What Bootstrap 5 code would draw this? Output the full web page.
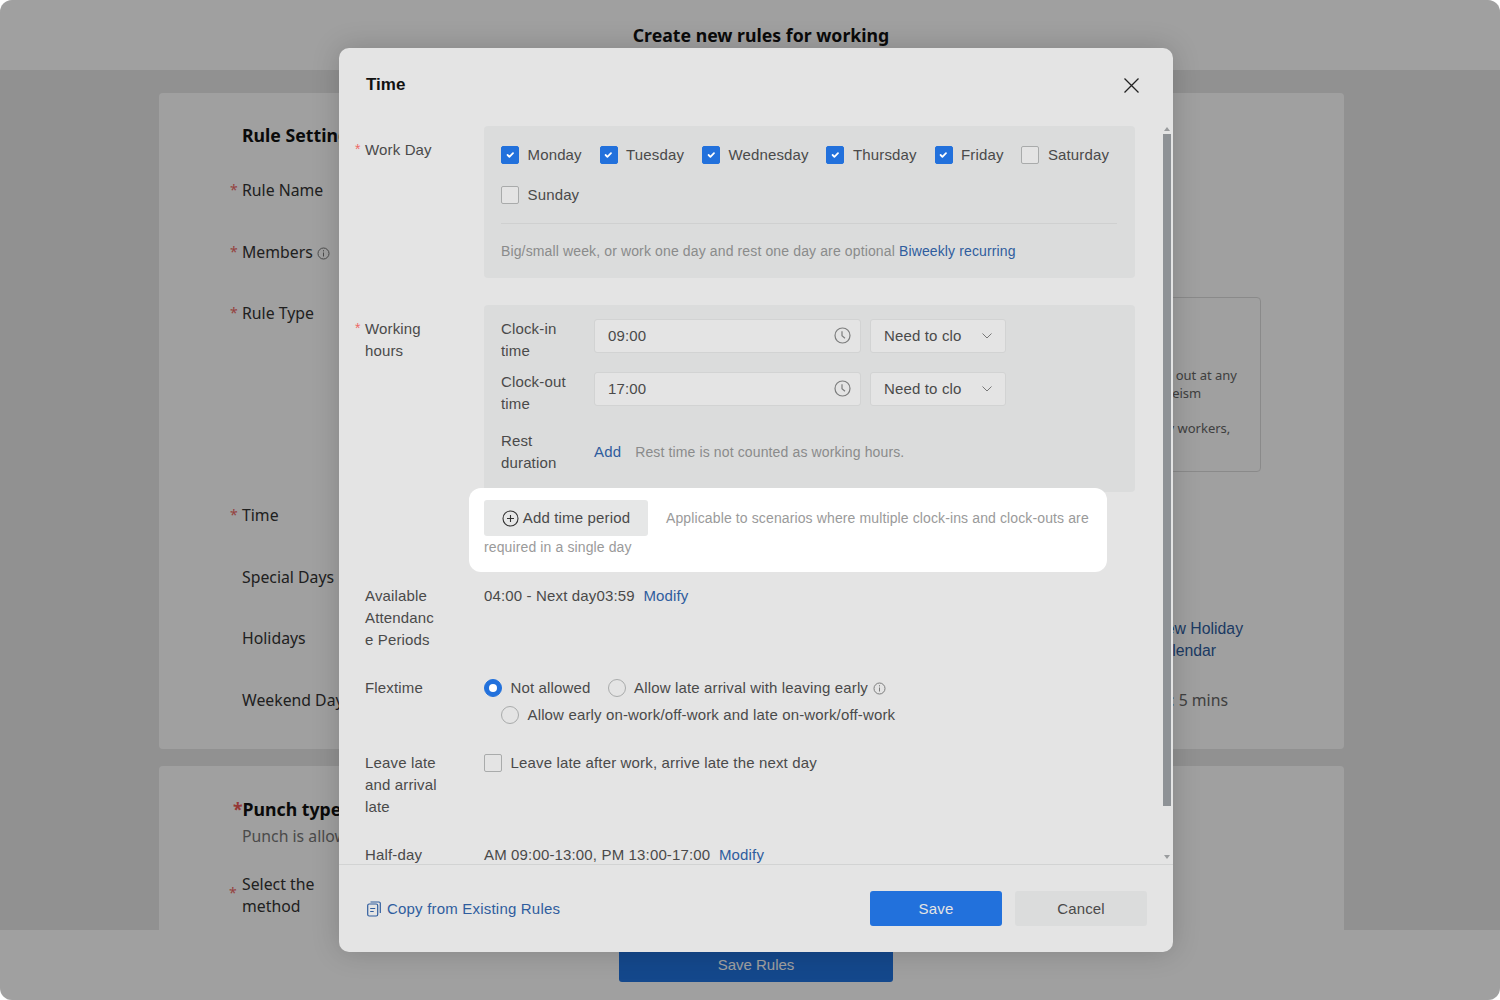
<!DOCTYPE html>
<html lang="en">
<head>
<meta charset="UTF-8">
<meta name="viewport" content="width=device-width, initial-scale=1.0">
<title>Create new rules for working</title>
<link href="https://cdn.jsdelivr.net/npm/bootstrap@5.3.3/dist/css/bootstrap.min.css" rel="stylesheet"/>
<style>
  html, body { height: 100%; background: #fff; overflow: hidden; }
  body { font-family: "Liberation Sans", Arial, sans-serif; }

  /* page behind the dialog */
  .app-shell { width: 1500px; height: 1000px; border-radius: 12px; overflow: hidden; position: relative; background: #e8e8e8; }
  .top-title { height: 70px; background: #fff; font-family: "Noto Sans", sans-serif; font-weight: 700; font-size: 17.7px; color: #111; padding-left: 22px; }
  .page-main { height: 860px; overflow: hidden; padding: 23px 156px 0 159px; font-family: "Noto Sans", sans-serif; font-size: 15.8px; line-height: 22px; color: #333; }
  .rule-panel { background: #fff; border-radius: 4px; padding: 31px 83px 0 83px; height: 656px; margin-bottom: 17px; }
  .rule-panel-2 { height: 300px; padding-top: 32px; padding-left: 74px; }
  .rule-heading { font-weight: 700; font-size: 17.7px; color: #111; margin-bottom: 33px; }
  .rule-row { display: flex; height: 22px; margin-bottom: 39.6px; position: relative; }
  .rule-label { width: 200px; flex: none; }
  .req { color: #ee6a66; position: absolute; margin-left: -12px; font-size: 14px; }
  .rule-box { margin-left: auto; margin-top: -5px; width: 360px; height: 175px; flex: none; border: 1px solid #ddd; border-radius: 4px; font-size: 13px; line-height: 17.5px; color: #666; padding: 69px 0 0 104px; white-space: nowrap; }
  .rule-type-row { height: 169px; margin-bottom: 33px; }
  .holiday-link { margin-left: auto; margin-right: 12px; margin-top: -9px; width: 97px; font-family: "Liberation Sans", sans-serif; color: #2f5d9e; }
  .grace-note { margin-left: auto; margin-right: 33px; color: #666; }
  .method-star { margin: 9px 0 0 -8px; }
  .page-bottom { height: 70px; background: #fff; padding: 18px 0 0 619px; }
  .save-rules { width: 274px; height: 34px; line-height: 34px; background: #2174df; color: #fff; border-radius: 3px; font-size: 15px; }
  .dim-layer { position: absolute; inset: 0; background: rgba(0, 0, 0, .373); }

  /* dialog */
  .time-dialog { position: absolute; left: 339px; top: 48px; width: 834px; height: 904px; background: #e4e4e4; border: 0; border-radius: 10px; box-shadow: 0 0 28px rgba(0, 0, 0, .18); color: #4a4a4a; font-size: 15px; line-height: 22px; letter-spacing: .15px; overflow: hidden; }
  .time-dialog .modal-header { height: 64px; flex: none; border: 0; padding: 25px 34px 0 27px; align-items: flex-start; }
  .time-dialog .modal-title { font-size: 17px; line-height: 22px; font-weight: 700; color: #111; letter-spacing: 0; margin-top: 1px; }
  .close-x { background: none; border: 0; padding: 0; line-height: 0; margin-top: 5px; }
  .time-dialog .modal-body { padding: 14px 38px 0 16px; overflow: hidden; flex: 1 1 auto; height: 752px; }
  .form-line { display: flex; margin-bottom: 26px; }
  .form-line-flex { margin-bottom: 24px; }
  .form-name { width: 129px; flex: none; padding-left: 10px; padding-right: 43px; position: relative; overflow-wrap: anywhere; }
  .form-name .req { margin-left: -10px; line-height: 20px; }
  .name-inset { padding-top: 13px; }
  .form-value { flex: 1 1 auto; min-width: 0; }
  .gray-block { background: #dbdcdc; border-radius: 4px; }
  .day-block { padding: 18px 18px 16px 17px; height: 152px; margin-bottom: 1px; }
  .day-list { display: flex; flex-wrap: wrap; column-gap: 17.8px; row-gap: 18px; }
  .pick { display: inline-flex; align-items: center; gap: 8.5px; margin: 0; }
  .pick .form-check-input { width: 18px; height: 18px; margin: 0; background-color: transparent; border: 1px solid #a9abab; flex: none; }
  .pick .form-check-input[type=checkbox] { border-radius: 2px; background-size: 78%; background-color: #e4e4e4; }
  .pick .form-check-input:checked { background-color: #2271dc; border-color: #2271dc; }
  .day-rule { height: 1px; background: #cfd0d0; margin: 17px 0 16px; }
  .hint-text { color: #8a8b8b; font-size: 14px; letter-spacing: .13px; }
  .blue-link { color: #2f5d9e; text-decoration: none; }
  .hours-block { padding: 13px 18px 18px 17px; height: 187px; }
  .hours-row { display: flex; height: 44px; margin-bottom: 9px; }
  .hours-row-last { margin: 15px 0 0; align-items: center; }
  .hours-name { width: 93px; flex: none; padding-right: 20px; }
  .time-input { width: 267px; margin-top: 1px; position: relative; }
  .time-input .form-control, .need-select.form-select { height: 34px; background-color: #e4e4e4; border: 1px solid #d2d3d3; border-radius: 3px; font-size: 15px; letter-spacing: .15px; color: #4a4a4a; padding: 0 13px; box-shadow: none; }
  .time-input .form-control { padding-bottom: 1px; }
  .clock-icon { position: absolute; right: 10px; top: 8px; }
  .need-select.form-select { width: 136px; margin: 1px 0 0 9px; padding-right: 30px; background-image: url("data:image/svg+xml,%3csvg xmlns='http://www.w3.org/2000/svg' viewBox='0 0 10 6'%3e%3cpath fill='none' stroke='%23777' d='M.5.5 5 5 9.5.5'/%3e%3c/svg%3e"); background-position: right 13px center; background-size: 10px 6px; }
  .spot-area { position: relative; background: #fff; border-radius: 12px; margin: -4px 28px 13px 114px; padding: 12px 15px 14px; height: 84px; color: #9a9a9a; font-size: 14px; letter-spacing: .12px; line-height: 22px; }
  .add-period { display: inline-flex; align-items: center; gap: 4px; width: 164px; height: 36px; justify-content: center; padding: 0; margin-right: 18px; background: #e6e7e7; border: 0; border-radius: 3px; color: #4a4a4a; font-size: 15px; letter-spacing: .15px; vertical-align: baseline; }
  .period-hint { vertical-align: 4px; }
  .flex-line { display: flex; align-items: center; height: 26.5px; gap: 17px; }
  .flex-line-2 { padding-left: 17px; }
  .flex-line .info-dot { margin-left: -12px; }
  .scroll-thumb { position: absolute; left: 824px; top: 86px; width: 8px; height: 672px; background: #8e9296; }
  .scroll-up, .scroll-down { position: absolute; left: 825px; width: 0; height: 0; border-left: 3px solid transparent; border-right: 3px solid transparent; }
  .scroll-up { top: 79px; border-bottom: 4px solid #9a9c9e; }
  .scroll-down { top: 807px; border-top: 4px solid #9a9c9e; }
  .time-dialog .modal-footer { height: 88px; flex: none; flex-wrap: nowrap; justify-content: space-between; border-top: 1px solid #d2d3d3; padding: 0 26px 0 28px; }
  .time-dialog .modal-footer > * { margin: 0; }
  .copy-link { display: flex; align-items: center; gap: 6px; font-size: 15px; letter-spacing: .2px; padding-top: 1px; }
  .foot-btn { width: 132px; height: 35px; font-size: 15px; padding: 1px 0 0; border: 0; border-radius: 3px; letter-spacing: .15px; }
  .foot-btn.btn-primary { background: #2271dc; color: #e4e4e4; }
  .foot-btn.btn-light { background: #dbdcdc; color: #4a4a4a; margin-left: 13px; }
</style>
</head>
<body>
<div class="app-shell">
  <div class="top-title d-flex align-items-center justify-content-center">Create new rules for working</div>

  <div class="page-main">
    <div class="rule-panel">
      <div class="rule-heading">Rule Settings</div>
      <div class="rule-row"><span class="req">*</span><div class="rule-label">Rule Name</div></div>
      <div class="rule-row"><span class="req">*</span><div class="rule-label">Members
        <svg width="13" height="13" viewBox="0 0 13 13" fill="none" stroke="#777"><circle cx="6.5" cy="6.5" r="5.5"/><path d="M6.5 5.5v4M6.5 3.2v1.2"/></svg></div></div>
      <div class="rule-row rule-type-row"><span class="req">*</span><div class="rule-label">Rule Type</div>
        <div class="rule-box">Employees can clock in and out at any<br>times, no lateness, absenteeism<br>&nbsp;<br>Suitable for any flexible day workers,</div></div>
      <div class="rule-row"><span class="req">*</span><div class="rule-label">Time</div></div>
      <div class="rule-row"><div class="rule-label">Special Days</div></div>
      <div class="rule-row"><div class="rule-label">Holidays</div><div class="holiday-link">View Holiday Calendar</div></div>
      <div class="rule-row"><div class="rule-label">Weekend Days</div><div class="grace-note">Grace: 5 mins</div></div>
    </div>
    <div class="rule-panel rule-panel-2">
      <div class="fw-bold" style="font-size:17.7px;color:#111"><span style="color:#ee5a56">*</span>Punch type</div>
      <div style="color:#777;margin:5px 0 26px 9px">Punch is allowed</div>
      <div class="rule-row ms-1"><span class="req method-star">*</span><div style="margin-left:5px;width:90px">Select the method</div></div>
    </div>
  </div>

  <div class="page-bottom"><div class="save-rules text-center">Save Rules</div></div>
  <div class="dim-layer"></div>

  <div class="modal-content time-dialog">
    <div class="modal-header">
      <h5 class="modal-title">Time</h5>
      <button type="button" class="close-x" aria-label="Close">
        <svg width="15" height="15" viewBox="0 0 15 15" stroke="#222" stroke-width="1.3"><path d="M.5.5l14 14M14.5.5l-14 14"/></svg>
      </button>
    </div>

    <div class="modal-body">
      <div class="form-line">
        <div class="form-name name-inset"><span class="req">*</span>Work Day</div>
        <div class="form-value gray-block day-block">
          <div class="day-list">
            <label class="pick"><input class="form-check-input" type="checkbox" checked>Monday</label>
            <label class="pick"><input class="form-check-input" type="checkbox" checked>Tuesday</label>
            <label class="pick"><input class="form-check-input" type="checkbox" checked>Wednesday</label>
            <label class="pick"><input class="form-check-input" type="checkbox" checked>Thursday</label>
            <label class="pick"><input class="form-check-input" type="checkbox" checked>Friday</label>
            <label class="pick"><input class="form-check-input" type="checkbox">Saturday</label>
            <label class="pick"><input class="form-check-input" type="checkbox">Sunday</label>
          </div>
          <div class="day-rule"></div>
          <div class="hint-text">Big/small week, or work one day and rest one day are optional <a href="#" class="blue-link">Biweekly recurring</a></div>
        </div>
      </div>

      <div class="form-line mb-0">
        <div class="form-name name-inset"><span class="req">*</span>Working hours</div>
        <div class="form-value gray-block hours-block">
          <div class="hours-row">
            <div class="hours-name">Clock-in time</div>
            <div class="time-input">
              <input class="form-control" type="text" value="09:00">
              <svg class="clock-icon" width="17" height="17" viewBox="0 0 17 17" fill="none" stroke="#7c7d7d" stroke-width="1.2"><circle cx="8.5" cy="8.5" r="7.5"/><path d="M8 4.2v4.6l3 2.4"/></svg>
            </div>
            <select class="form-select need-select"><option>Need to clo</option></select>
          </div>
          <div class="hours-row">
            <div class="hours-name">Clock-out time</div>
            <div class="time-input">
              <input class="form-control" type="text" value="17:00">
              <svg class="clock-icon" width="17" height="17" viewBox="0 0 17 17" fill="none" stroke="#7c7d7d" stroke-width="1.2"><circle cx="8.5" cy="8.5" r="7.5"/><path d="M8 4.2v4.6l3 2.4"/></svg>
            </div>
            <select class="form-select need-select"><option>Need to clo</option></select>
          </div>
          <div class="hours-row hours-row-last">
            <div class="hours-name">Rest duration</div>
            <a href="#" class="blue-link">Add</a>
            <span class="hint-text" style="margin-left:14px">Rest time is not counted as working hours.</span>
          </div>
        </div>
      </div>

      <div class="spot-area">
        <button type="button" class="add-period">
          <svg width="17" height="17" viewBox="0 0 17 17" fill="none" stroke="#333" stroke-width="1.1"><circle cx="8.5" cy="8.5" r="7.5"/><path d="M8.5 5v7M5 8.5h7"/></svg>Add time period</button><span class="period-hint">Applicable to scenarios where multiple clock-ins and clock-outs are</span><br><span>required in a single day</span>
      </div>

      <div class="form-line">
        <div class="form-name">Available Attendance Periods</div>
        <div class="form-value">04:00 - Next day03:59 &nbsp;<a href="#" class="blue-link">Modify</a></div>
      </div>

      <div class="form-line form-line-flex">
        <div class="form-name">Flextime</div>
        <div class="form-value" style="margin-top:-2px">
          <div class="flex-line">
            <label class="pick"><input class="form-check-input" type="radio" name="flex" checked>Not allowed</label>
            <label class="pick"><input class="form-check-input" type="radio" name="flex">Allow late arrival with leaving early</label>
            <svg class="info-dot" width="13" height="13" viewBox="0 0 13 13" fill="none" stroke="#7c7d7d"><circle cx="6.5" cy="6.5" r="5.5"/><path d="M6.5 5.5v4M6.5 3.2v1.2"/></svg>
          </div>
          <div class="flex-line flex-line-2">
            <label class="pick"><input class="form-check-input" type="radio" name="flex">Allow early on-work/off-work and late on-work/off-work</label>
          </div>
        </div>
      </div>

      <div class="form-line">
        <div class="form-name">Leave late and arrival late</div>
        <div class="form-value"><label class="pick"><input class="form-check-input" type="checkbox">Leave late after work, arrive late the next day</label></div>
      </div>

      <div class="form-line">
        <div class="form-name">Half-day</div>
        <div class="form-value">AM 09:00-13:00, PM 13:00-17:00 &nbsp;<a href="#" class="blue-link">Modify</a></div>
      </div>
    </div>

    <div class="modal-footer">
      <a href="#" class="blue-link copy-link">
        <svg width="14" height="16" viewBox="0 0 14 16" fill="none" stroke="#2f5d9e" stroke-width="1.2"><rect x=".7" y="3" width="10" height="12" rx="1.5"/><path d="M3.5 1h8.5a1.3 1.3 0 0 1 1.3 1.3V12M3.2 7.5h5M3.2 10.5h3.5"/></svg>
        Copy from Existing Rules</a>
      <div class="d-flex">
        <button type="button" class="btn btn-primary foot-btn">Save</button>
        <button type="button" class="btn btn-light foot-btn">Cancel</button>
      </div>
    </div>

    <div class="scroll-up"></div>
    <div class="scroll-thumb"></div>
    <div class="scroll-down"></div>
  </div>
</div>
<script src="https://cdn.jsdelivr.net/npm/bootstrap@5.3.3/dist/js/bootstrap.bundle.min.js"></script>
</body>
</html>
